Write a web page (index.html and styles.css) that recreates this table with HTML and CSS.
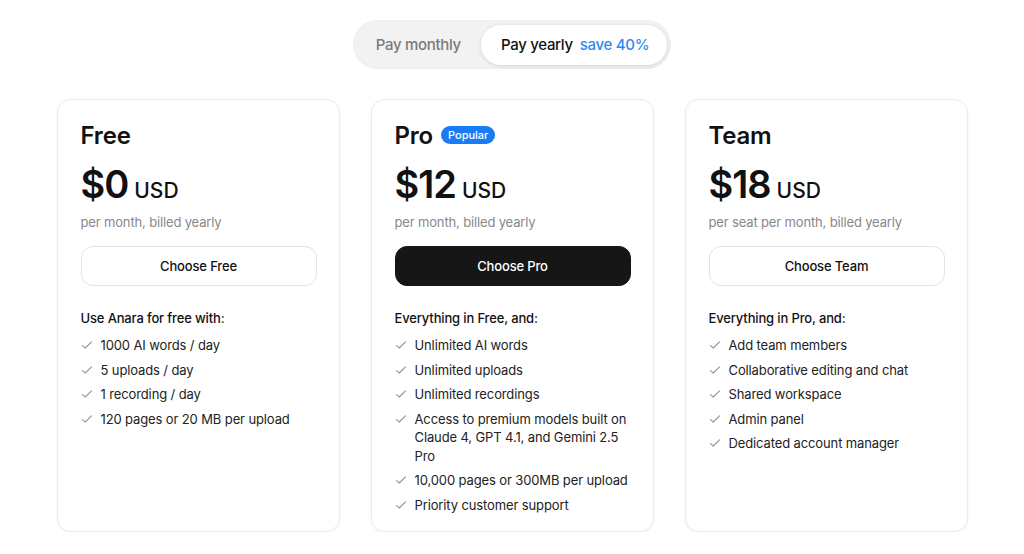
FILE: index.html
```html
<!DOCTYPE html>
<html lang="en">
<head>
<meta charset="utf-8">
<title>Pricing</title>
<link rel="stylesheet" href="styles.css">
</head>
<body>
<main class="page">
  <div class="toggle">
    <span class="toggle-opt">Pay monthly</span>
    <span class="toggle-opt active">Pay yearly <span class="save">save 40%</span></span>
  </div>

  <section class="plans">
    <article class="card">
      <h2 class="plan-name">Free</h2>
      <div class="price"><span class="amount">$0</span><span class="cur">USD</span></div>
      <p class="billing">per month, billed yearly</p>
      <button class="btn">Choose Free</button>
      <h3 class="feat-head">Use Anara for free with:</h3>
      <ul class="feats">
        <li><svg class="chk" viewBox="0 0 12 12"><path d="M1.5 6.6 L4.3 9 L10.5 2.8"/></svg><span>1000 AI words / day</span></li>
        <li><svg class="chk" viewBox="0 0 12 12"><path d="M1.5 6.6 L4.3 9 L10.5 2.8"/></svg><span>5 uploads / day</span></li>
        <li><svg class="chk" viewBox="0 0 12 12"><path d="M1.5 6.6 L4.3 9 L10.5 2.8"/></svg><span>1 recording / day</span></li>
        <li><svg class="chk" viewBox="0 0 12 12"><path d="M1.5 6.6 L4.3 9 L10.5 2.8"/></svg><span>120 pages or 20 MB per upload</span></li>
      </ul>
    </article>

    <article class="card">
      <h2 class="plan-name">Pro <span class="badge">Popular</span></h2>
      <div class="price"><span class="amount">$12</span><span class="cur">USD</span></div>
      <p class="billing">per month, billed yearly</p>
      <button class="btn btn-dark">Choose Pro</button>
      <h3 class="feat-head">Everything in Free, and:</h3>
      <ul class="feats">
        <li><svg class="chk" viewBox="0 0 12 12"><path d="M1.5 6.6 L4.3 9 L10.5 2.8"/></svg><span>Unlimited AI words</span></li>
        <li><svg class="chk" viewBox="0 0 12 12"><path d="M1.5 6.6 L4.3 9 L10.5 2.8"/></svg><span>Unlimited uploads</span></li>
        <li><svg class="chk" viewBox="0 0 12 12"><path d="M1.5 6.6 L4.3 9 L10.5 2.8"/></svg><span>Unlimited recordings</span></li>
        <li><svg class="chk" viewBox="0 0 12 12"><path d="M1.5 6.6 L4.3 9 L10.5 2.8"/></svg><span>Access to premium models built on Claude 4, GPT 4.1, and Gemini 2.5 Pro</span></li>
        <li><svg class="chk" viewBox="0 0 12 12"><path d="M1.5 6.6 L4.3 9 L10.5 2.8"/></svg><span>10,000 pages or 300MB per upload</span></li>
        <li><svg class="chk" viewBox="0 0 12 12"><path d="M1.5 6.6 L4.3 9 L10.5 2.8"/></svg><span>Priority customer support</span></li>
      </ul>
    </article>

    <article class="card">
      <h2 class="plan-name">Team</h2>
      <div class="price"><span class="amount">$18</span><span class="cur">USD</span></div>
      <p class="billing">per seat per month, billed yearly</p>
      <button class="btn">Choose Team</button>
      <h3 class="feat-head">Everything in Pro, and:</h3>
      <ul class="feats">
        <li><svg class="chk" viewBox="0 0 12 12"><path d="M1.5 6.6 L4.3 9 L10.5 2.8"/></svg><span>Add team members</span></li>
        <li><svg class="chk" viewBox="0 0 12 12"><path d="M1.5 6.6 L4.3 9 L10.5 2.8"/></svg><span>Collaborative editing and chat</span></li>
        <li><svg class="chk" viewBox="0 0 12 12"><path d="M1.5 6.6 L4.3 9 L10.5 2.8"/></svg><span>Shared workspace</span></li>
        <li><svg class="chk" viewBox="0 0 12 12"><path d="M1.5 6.6 L4.3 9 L10.5 2.8"/></svg><span>Admin panel</span></li>
        <li><svg class="chk" viewBox="0 0 12 12"><path d="M1.5 6.6 L4.3 9 L10.5 2.8"/></svg><span>Dedicated account manager</span></li>
      </ul>
    </article>
  </section>
</main>
</body>
</html>
```

FILE: styles.css
```css
* { box-sizing: border-box; }

html, body {
  margin: 0;
  padding: 0;
  background: #ffffff;
}

body {
  font-family: Inter, "Noto Sans", "Liberation Sans", sans-serif;
  color: #111111;
}

.page {
  display: flex;
  flex-direction: column;
  align-items: center;
  padding-top: 21px;
}

.toggle {
  display: flex;
  align-items: center;
  height: 47px;
  padding: 4px 3px 4px 4px;
  background: #f2f2f2;
  border-radius: 24px;
  box-shadow: 0 0 0 1px #eeeeee;
}

.toggle-opt {
  display: flex;
  align-items: center;
  height: 40px;
  padding: 0 20px 0 18px;
  font-size: 15px;
  font-weight: 500;
  letter-spacing: -0.3px;
  color: #7a7a7a;
  border-radius: 20px;
}

.toggle-opt.active {
  background: #ffffff;
  color: #111111;
  padding: 0 18px 0 20px;
  box-shadow: 0 1px 4px rgba(0, 0, 0, 0.12);
}

.save {
  color: #2a8bf5;
  margin-left: 7px;
}

.plans {
  display: flex;
  gap: 31px;
  margin-top: 31px;
  align-items: stretch;
}

.card {
  width: 283px;
  height: 433px;
  background: #ffffff;
  border: 1px solid #ececec;
  border-radius: 14px;
  box-shadow: 0 1px 3px rgba(0, 0, 0, 0.06);
  padding: 21px 22px 18px 23px;
  display: flex;
  flex-direction: column;
}

.card > * { flex: none; }

.plan-name {
  margin: 0;
  font-size: 24px;
  line-height: 30px;
  font-weight: 600;
  letter-spacing: -0.2px;
  display: flex;
  align-items: center;
}

.badge {
  display: inline-block;
  margin-left: 8px;
  background: #1a7cf5;
  color: #ffffff;
  font-size: 11px;
  font-weight: 500;
  line-height: 18px;
  padding: 0 7px;
  border-radius: 9px;
  letter-spacing: 0;
  position: relative;
  top: -1px;
}

.price {
  margin-top: 13px;
  display: flex;
  align-items: baseline;
  line-height: 40px;
}

.amount {
  font-size: 38px;
  font-weight: 600;
  letter-spacing: -1px;
}

.cur {
  font-size: 21px;
  font-weight: 500;
  margin-left: 6px;
}

.billing {
  margin: 1px 0 0;
  font-size: 13px;
  line-height: 20px;
  letter-spacing: -0.15px;
  color: #888888;
}

.btn {
  margin-top: 14px;
  height: 40px;
  width: 100%;
  border: 1.5px solid #e3e3e3;
  border-radius: 12px;
  background: #ffffff;
  font-family: inherit;
  font-size: 13px;
  letter-spacing: -0.15px;
  font-weight: 500;
  color: #111111;
  cursor: pointer;
}

.btn-dark {
  background: #161616;
  border-color: #161616;
  color: #ffffff;
}

.feat-head {
  margin: 22px 0 0;
  font-size: 13px;
  line-height: 20px;
  letter-spacing: -0.15px;
  font-weight: 500;
}

.feats {
  list-style: none;
  margin: 8px 0 0;
  padding: 0;
  display: flex;
  flex-direction: column;
  gap: 6px;
}

.feats li {
  display: flex;
  align-items: flex-start;
  gap: 8px;
  font-size: 13px;
  line-height: 18.5px;
  letter-spacing: -0.12px;
  color: #222222;
}

.chk {
  flex: none;
  width: 12px;
  height: 12px;
  margin-top: 3px;
  fill: none;
  stroke: #9a9a9a;
  stroke-width: 1.2;
  stroke-linecap: round;
  stroke-linejoin: round;
}
```
